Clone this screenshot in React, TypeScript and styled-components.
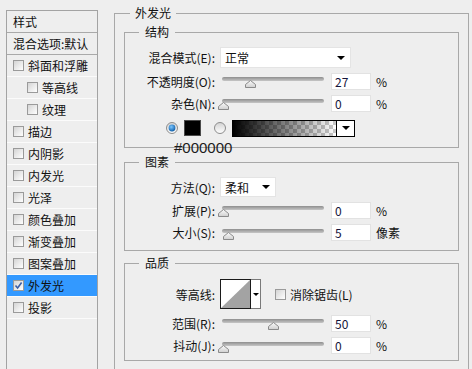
import React from "react";
import styled, { createGlobalStyle } from "styled-components";

const GlobalStyle = createGlobalStyle`
  html, body {
    margin: 0;
    padding: 0;
    background: #eeeeee;
    overflow: hidden;
  }
  body {
    font-family: "Noto Sans CJK SC", "Noto Sans", sans-serif;
    font-size: 12px;
    color: #111;
  }
`;

const styleItems = [
  { label: "斜面和浮雕" },
  { label: "等高线", sub: true },
  { label: "纹理", sub: true },
  { label: "描边" },
  { label: "内阴影" },
  { label: "内发光" },
  { label: "光泽" },
  { label: "颜色叠加" },
  { label: "渐变叠加" },
  { label: "图案叠加" },
  { label: "外发光", active: true },
  { label: "投影" },
];

const Checkbox = ({ checked }: { checked?: boolean }) => (
  <CheckBoxBox>
    {checked && (
      <svg width="9" height="9" viewBox="0 0 9 9">
        <path d="M1.5 4.5 L3.6 7 L7.6 1.6" fill="none" stroke="#3a5ea8" strokeWidth="1.6" />
      </svg>
    )}
  </CheckBoxBox>
);

const Radio = ({ on }: { on?: boolean }) => (
  <svg width="12" height="12" viewBox="0 0 12 12" style={{ flex: "none" }}>
    <defs>
      <linearGradient id={on ? "rOn" : "rOff"} x1="0" y1="0" x2="0" y2="1">
        <stop offset="0" stopColor="#d2d2d2" />
        <stop offset="1" stopColor="#ffffff" />
      </linearGradient>
      <radialGradient id="rDot" cx="0.4" cy="0.35" r="0.7">
        <stop offset="0" stopColor="#7cc7ff" />
        <stop offset="1" stopColor="#0a5aa6" />
      </radialGradient>
    </defs>
    <circle cx="6" cy="6" r="5.5" fill={`url(#${on ? "rOn" : "rOff"})`} stroke="#8c8c8c" />
    {on && <circle cx="6" cy="6" r="3.4" fill="url(#rDot)" />}
  </svg>
);

const Slider = ({ value }: { value: number }) => (
  <SliderBox>
    <Track />
    <ThumbWrap style={{ left: 3 + value - 5.5 }}>
      <svg width="11" height="8" viewBox="0 0 11 8">
        <defs>
          <linearGradient id="th" x1="0" y1="0" x2="0" y2="1">
            <stop offset="0" stopColor="#fbfbfb" />
            <stop offset="1" stopColor="#cfcfcf" />
          </linearGradient>
        </defs>
        <path d="M0.5 7.5 L0.5 4.5 L5.5 0.5 L10.5 4.5 L10.5 7.5 Z" fill="url(#th)" stroke="#8a8a8a" />
      </svg>
    </ThumbWrap>
  </SliderBox>
);

const SliderRow = ({ label, value, unit, h }: { label: string; value: number; unit: string; h: number }) => (
  <Row $h={h}>
    <Label>{label}</Label>
    <Slider value={value} />
    <NumBox>{value}</NumBox>
    <Unit>{unit}</Unit>
  </Row>
);

const App = () => {
  return (
    <>
      <GlobalStyle />
      <Page>
        <StylePanel>
          <PanelHead>样式</PanelHead>
          <PanelHead>混合选项:默认</PanelHead>
          {styleItems.map((it) => (
            <StyleItem key={it.label} $sub={it.sub} $active={it.active}>
              <Checkbox checked={it.active} />
              <span>{it.label}</span>
            </StyleItem>
          ))}
        </StylePanel>

        <EffectBox>
          <OuterLegend>外发光</OuterLegend>

          <Group $mt={3}>
            <Legend>结构</Legend>
            <GroupBody $pt={5} $pb={6}>
              <Row $h={25}>
                <Label>混合模式(E):</Label>
                <Select $w={131} $h={21}>
                  正常
                  <Arrow />
                </Select>
              </Row>
              <SliderRow label="不透明度(O):" value={27} unit="%" h={22} />
              <SliderRow label="杂色(N):" value={0} unit="%" h={22} />
              <ColorRow>
                <Radio on />
                <Swatch />
                <Radio />
                <GradientPick>
                  <GradientBar />
                  <GradientDrop>
                    <Arrow />
                  </GradientDrop>
                </GradientPick>
                <HexLabel>#000000</HexLabel>
              </ColorRow>
            </GroupBody>
          </Group>

          <Group $mt={6}>
            <Legend>图素</Legend>
            <GroupBody $pt={5} $pb={7}>
              <Row $h={24}>
                <Label>方法(Q):</Label>
                <Select $w={56} $h={20}>
                  柔和
                  <Arrow />
                </Select>
              </Row>
              <SliderRow label="扩展(P):" value={0} unit="%" h={22} />
              <SliderRow label="大小(S):" value={5} unit="像素" h={23} />
            </GroupBody>
          </Group>

          <Group $mt={4}>
            <Legend>品质</Legend>
            <GroupBody $pt={6} $pb={5}>
              <Row $h={34}>
                <Label>等高线:</Label>
                <ContourPick>
                  <ContourImage>
                    <svg width="29" height="28" viewBox="0 0 29 28">
                      <rect width="29" height="28" fill="#ffffff" />
                      <path d="M0 28 L29 0 L29 28 Z" fill="#a3a3a3" />
                    </svg>
                  </ContourImage>
                  <ContourDrop>
                    <SmallArrow />
                  </ContourDrop>
                </ContourPick>
                <AntiAlias>
                  <Checkbox />
                  <span>消除锯齿(L)</span>
                </AntiAlias>
              </Row>
              <SliderRow label="范围(R):" value={50} unit="%" h={24} />
              <SliderRow label="抖动(J):" value={0} unit="%" h={21} />
            </GroupBody>
          </Group>
        </EffectBox>
      </Page>
    </>
  );
};

export default App;

const Page = styled.div`
  display: flex;
  align-items: flex-start;
  width: 472px;
  height: 369px;
  padding-left: 6px;
  box-sizing: border-box;
  overflow: hidden;
`;

const StylePanel = styled.div`
  margin-top: 10px;
  width: 92px;
  height: 380px;
  flex: none;
  box-sizing: border-box;
  border: 1px solid #a3a3a3;
  border-bottom: none;
  display: flex;
  flex-direction: column;
`;

const PanelHead = styled.div`
  height: 21px;
  line-height: 21px;
  padding-left: 6px;
  border-bottom: 1px solid #a9a9a9;
  white-space: nowrap;
`;

const StyleItem = styled.div<{ $sub?: boolean; $active?: boolean }>`
  height: 21px;
  display: flex;
  align-items: center;
  gap: 4px;
  padding-left: ${(p) => (p.$sub ? 20 : 6)}px;
  border-bottom: 1px solid #fbfbfb;
  background: ${(p) => (p.$active ? "#3399ff" : "transparent")};
  white-space: nowrap;
`;

const CheckBoxBox = styled.span`
  width: 11px;
  height: 11px;
  flex: none;
  box-sizing: border-box;
  border: 1px solid #9a9a9a;
  background: linear-gradient(135deg, #d4d4d4, #ffffff);
  display: flex;
  align-items: center;
  justify-content: center;
`;

const EffectBox = styled.fieldset`
  margin: 5px 0 0 16px;
  padding: 0;
  width: 355px;
  height: 380px;
  flex: none;
  box-sizing: border-box;
  border: 1px solid #a8a8a8;
  min-inline-size: 0;
`;

const OuterLegend = styled.legend`
  margin-left: 15px;
  padding: 0 5px;
  line-height: 16px;
  font-size: 12px;
`;

const Group = styled.fieldset<{ $mt: number }>`
  margin: ${(p) => p.$mt}px 9px 0;
  padding: 0;
  border: 1px solid #a8a8a8;
  min-inline-size: 0;
`;

const Legend = styled.legend`
  margin-left: 14px;
  padding: 0 6px;
  line-height: 16px;
  font-size: 12px;
`;

const GroupBody = styled.div<{ $pt: number; $pb: number }>`
  padding: ${(p) => p.$pt}px 0 ${(p) => p.$pb - 1}px;
`;

const Row = styled.div<{ $h: number }>`
  display: flex;
  align-items: center;
  height: ${(p) => p.$h}px;
`;

const Label = styled.span`
  width: 90px;
  margin-right: 5px;
  text-align: right;
  white-space: nowrap;
  flex: none;
`;

const Select = styled.div<{ $w: number; $h: number }>`
  width: ${(p) => p.$w}px;
  height: ${(p) => p.$h}px;
  box-sizing: border-box;
  background: #ffffff;
  border: 1px solid #e4e4e4;
  display: flex;
  align-items: center;
  justify-content: space-between;
  padding: 0 5px 0 4px;
`;

const Arrow = styled.span`
  width: 0;
  height: 0;
  border-left: 4px solid transparent;
  border-right: 4px solid transparent;
  border-top: 4px solid #000;
`;

const SmallArrow = styled.span`
  width: 0;
  height: 0;
  border-left: 3px solid transparent;
  border-right: 3px solid transparent;
  border-top: 3px solid #000;
`;

const SliderBox = styled.div`
  position: relative;
  width: 106px;
  height: 16px;
  margin-right: 5px;
  flex: none;
`;

const Track = styled.div`
  position: absolute;
  left: 2px;
  top: 4px;
  width: 102px;
  height: 4px;
  border-radius: 2px;
  background: linear-gradient(#8e8e8e, #c6c6c6);
`;

const ThumbWrap = styled.div`
  position: absolute;
  top: 7px;
  width: 11px;
  height: 8px;
  line-height: 0;
`;

const NumBox = styled.div`
  width: 40px;
  height: 17px;
  box-sizing: border-box;
  background: #ffffff;
  border: 1px solid #e2e2e2;
  padding-left: 3px;
  line-height: 15px;
  color: #14143a;
  flex: none;
`;

const Unit = styled.span`
  margin-left: 5px;
  white-space: nowrap;
`;

const ColorRow = styled.div`
  position: relative;
  display: flex;
  align-items: center;
  height: 28px;
  padding-left: 41px;
`;

const Swatch = styled.div`
  width: 17px;
  height: 16px;
  margin: 0 13px 0 6px;
  box-sizing: border-box;
  border: 1px solid #4a4a4a;
  background: #000000;
`;

const GradientPick = styled.div`
  margin-left: 6px;
  width: 123px;
  height: 17px;
  box-sizing: border-box;
  border: 1px solid #000;
  display: flex;
`;

const GradientBar = styled.div`
  flex: 1;
  background: linear-gradient(to right, #000 0%, rgba(0, 0, 0, 0) 100%),
    repeating-conic-gradient(#c8c8c8 0% 25%, #ffffff 0% 50%) 0 0 / 8px 8px;
`;

const GradientDrop = styled.div`
  width: 17px;
  border-left: 1px solid #000;
  background: #ffffff;
  display: flex;
  align-items: center;
  justify-content: center;
`;

const HexLabel = styled.span`
  position: absolute;
  left: 49px;
  top: 25px;
  font-family: "Liberation Sans", Arial, sans-serif;
  font-size: 15px;
  line-height: 17px;
  color: #1c1c1c;
`;

const ContourPick = styled.div`
  display: flex;
  height: 30px;
  flex: none;
`;

const ContourImage = styled.div`
  width: 31px;
  height: 30px;
  box-sizing: border-box;
  border: 1px solid #1a1a1a;
  line-height: 0;
`;

const ContourDrop = styled.div`
  width: 10px;
  height: 30px;
  box-sizing: border-box;
  border: 1px solid #7a7a7a;
  border-left: none;
  background: #ffffff;
  display: flex;
  align-items: center;
  justify-content: center;
`;

const AntiAlias = styled.div`
  display: flex;
  align-items: center;
  gap: 4px;
  margin-left: 14px;
  white-space: nowrap;
`;
